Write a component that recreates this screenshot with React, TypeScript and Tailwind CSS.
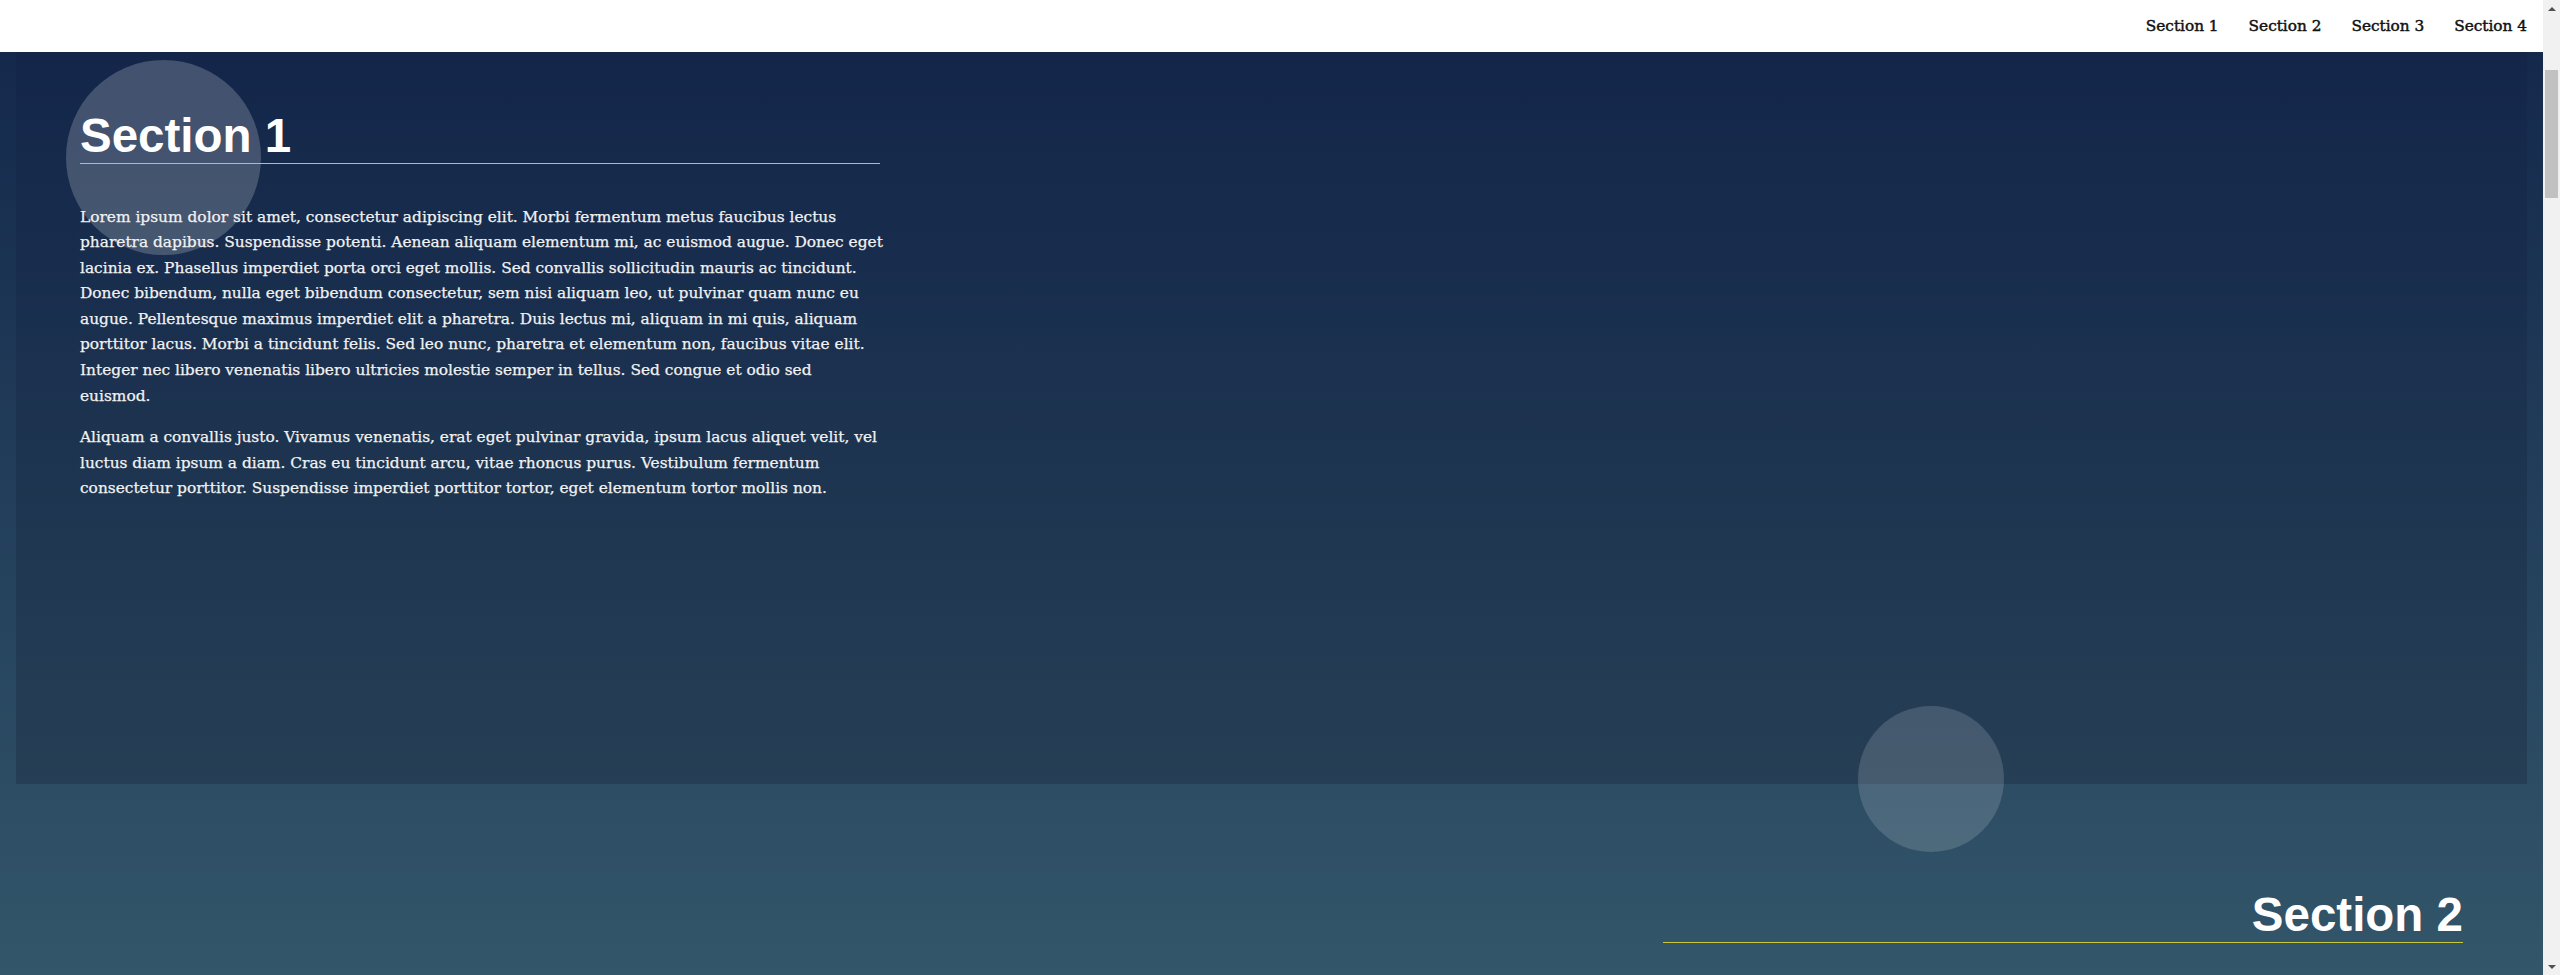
import React from 'react';

const navItems = ['Section 1', 'Section 2', 'Section 3', 'Section 4'];

// line breaks kept as in the design
const paragraphs = [
    [
        'Lorem ipsum dolor sit amet, consectetur adipiscing elit. Morbi fermentum metus faucibus lectus',
        'pharetra dapibus. Suspendisse potenti. Aenean aliquam elementum mi, ac euismod augue. Donec eget',
        'lacinia ex. Phasellus imperdiet porta orci eget mollis. Sed convallis sollicitudin mauris ac tincidunt.',
        'Donec bibendum, nulla eget bibendum consectetur, sem nisi aliquam leo, ut pulvinar quam nunc eu',
        'augue. Pellentesque maximus imperdiet elit a pharetra. Duis lectus mi, aliquam in mi quis, aliquam',
        'porttitor lacus. Morbi a tincidunt felis. Sed leo nunc, pharetra et elementum non, faucibus vitae elit.',
        'Integer nec libero venenatis libero ultricies molestie semper in tellus. Sed congue et odio sed',
        'euismod.',
    ],
    [
        'Aliquam a convallis justo. Vivamus venenatis, erat eget pulvinar gravida, ipsum lacus aliquet velit, vel',
        'luctus diam ipsum a diam. Cras eu tincidunt arcu, vitae rhoncus purus. Vestibulum fermentum',
        'consectetur porttitor. Suspendisse imperdiet porttitor tortor, eget elementum tortor mollis non.',
    ],
];

const serif = { fontFamily: '"DejaVu Serif", "Liberation Serif", serif' };
const sans = { fontFamily: '"Liberation Sans", Arial, sans-serif' };

const Heading: React.FC<{ children: React.ReactNode; right?: boolean }> = ({ children, right }) => (
    <h2
        className={`text-[47.5px] font-bold leading-none text-white pt-[1px] pb-[3px] border-b border-[#c9c73a] ${right ? 'text-right' : ''}`}
        style={sans}
    >
        {children}
    </h2>
);

const Scrollbar: React.FC = () => (
    <div className="w-[17px] shrink-0 bg-[#f1f1f1] flex flex-col items-center">
        <div className="h-[17px] flex items-center justify-center">
            <div className="w-0 h-0 border-l-[4px] border-r-[4px] border-b-[4px] border-l-transparent border-r-transparent border-b-[#505050]" />
        </div>
        <div className="mt-[53px] w-[13px] h-[128px] bg-[#c1c1c1]" />
        <div className="flex-1" />
        <div className="h-[17px] flex items-center justify-center">
            <div className="w-0 h-0 border-l-[4px] border-r-[4px] border-t-[4px] border-l-transparent border-r-transparent border-t-[#505050]" />
        </div>
    </div>
);

const App: React.FC = () => {
    return (
        <div className="flex h-[975px] w-full overflow-hidden">
            <div className="relative flex-1 flex flex-col overflow-hidden bg-gradient-to-b from-[#13264a] to-[#33566a]">
                <nav className="h-[52px] shrink-0 bg-white flex items-center justify-end gap-[30px] pr-[16px]" style={serif}>
                    {navItems.map(item => (
                        <a key={item} className="text-[15.3px] text-[#111] cursor-pointer" style={{ WebkitTextStroke: '0.45px #111' }}>{item}</a>
                    ))}
                </nav>

                {/* decorative bubbles */}
                <div className="absolute left-[66px] top-[60px] w-[195px] h-[195px] rounded-full bg-white/20" />

                <section className="mx-[16px] h-[732px] shrink-0 pl-[64px] pt-[59px] bg-gradient-to-b from-[#13264a] to-[#263f55]">
                    <div className="relative w-[800px]">
                        <Heading>Section 1</Heading>
                        <div className="mt-[41px] text-[15.4px] leading-[25.6px] text-[#f2f2f2]" style={{ ...serif, WebkitTextStroke: '0.25px #f2f2f2' }}>
                            {paragraphs.map((lines, i) => (
                                <p key={i} className="mb-[16px] whitespace-nowrap">
                                    {lines.map((line, j) => (
                                        <React.Fragment key={j}>
                                            {line}
                                            {j < lines.length - 1 && <br />}
                                        </React.Fragment>
                                    ))}
                                </p>
                            ))}
                        </div>
                    </div>
                </section>

                <section className="shrink-0 pt-[106px] pr-[80px] flex justify-end">
                    <div className="w-[800px]">
                        <Heading right>Section 2</Heading>
                    </div>
                </section>

                <div className="absolute left-[1858px] top-[706px] w-[146px] h-[146px] rounded-full bg-white/15" />
            </div>
            <Scrollbar />
        </div>
    );
};

export default App;
